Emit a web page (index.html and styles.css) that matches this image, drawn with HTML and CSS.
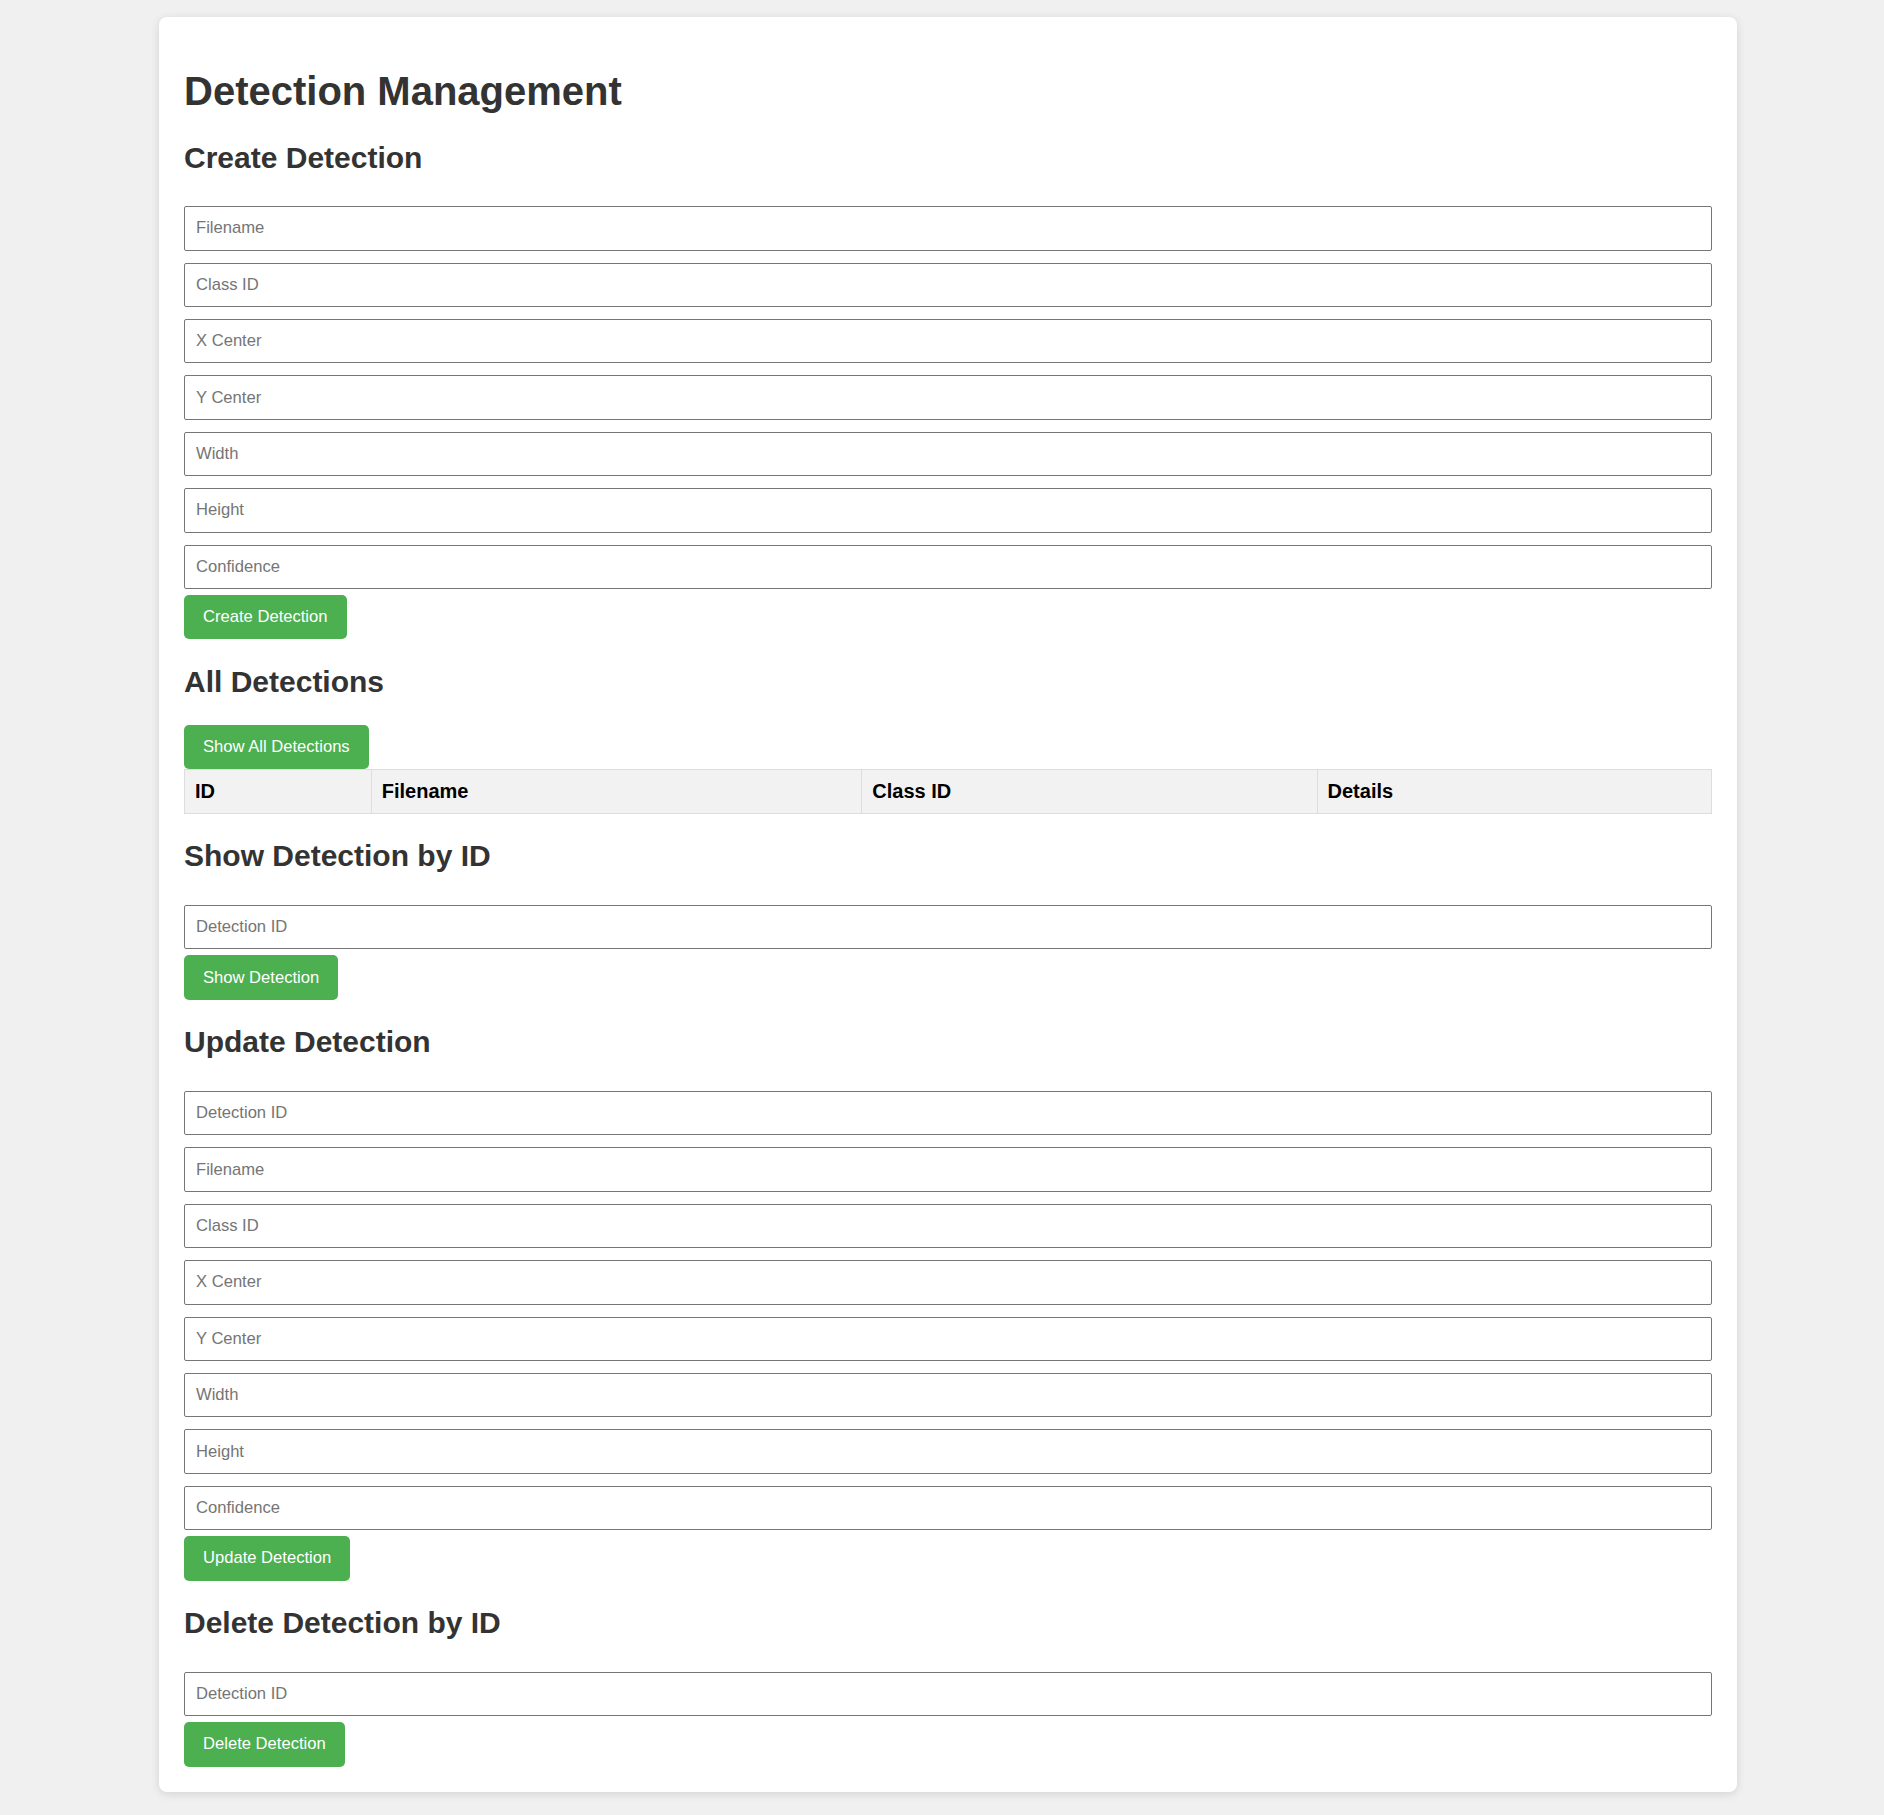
FILE: index.html
```html
<!DOCTYPE html>
<html lang="en">
<head>
<meta charset="utf-8">
<title>Detection Management</title>
<link rel="stylesheet" href="styles.css">
</head>
<body>
<div class="card">
  <h1>Detection Management</h1>

  <h2>Create Detection</h2>
  <div class="fields">
    <input type="text" placeholder="Filename">
    <input type="text" placeholder="Class ID">
    <input type="text" placeholder="X Center">
    <input type="text" placeholder="Y Center">
    <input type="text" placeholder="Width">
    <input type="text" placeholder="Height">
    <input type="text" placeholder="Confidence">
  </div>
  <button class="btn">Create Detection</button>

  <h2>All Detections</h2>
  <button class="btn">Show All Detections</button>
  <table class="table">
    <thead>
      <tr><th>ID</th><th>Filename</th><th>Class ID</th><th>Details</th></tr>
    </thead>
    <tbody></tbody>
  </table>

  <h2>Show Detection by ID</h2>
  <div class="fields">
    <input type="text" placeholder="Detection ID">
  </div>
  <button class="btn">Show Detection</button>

  <h2>Update Detection</h2>
  <div class="fields">
    <input type="text" placeholder="Detection ID">
    <input type="text" placeholder="Filename">
    <input type="text" placeholder="Class ID">
    <input type="text" placeholder="X Center">
    <input type="text" placeholder="Y Center">
    <input type="text" placeholder="Width">
    <input type="text" placeholder="Height">
    <input type="text" placeholder="Confidence">
  </div>
  <button class="btn">Update Detection</button>

  <h2>Delete Detection by ID</h2>
  <div class="fields">
    <input type="text" placeholder="Detection ID">
  </div>
  <button class="btn">Delete Detection</button>
</div>
</body>
</html>
```

FILE: styles.css
```css
html, body {
  margin: 0;
  padding: 0;
}

body {
  background: #f0f0f0;
  font-family: "Liberation Sans", Arial, sans-serif;
  font-size: 20px;
  color: #333;
  padding: 17px 0 26px;
}

.card {
  box-sizing: border-box;
  width: 1578px;
  margin-left: 159px;
  background: #fff;
  padding: 25px;
  border-radius: 8px;
  box-shadow: 0 2px 10px rgba(0, 0, 0, 0.12);
}

h1 {
  font-size: 40px;
  margin: 26.8px 0;
  color: #333;
}

h2 {
  font-size: 30px;
  margin: 25.6px 0;
  color: #333;
}

.fields {
  display: flex;
  flex-direction: column;
  gap: 12px;
  padding: 6px 0;
}

.fields input {
  box-sizing: border-box;
  display: block;
  width: 100%;
  height: 44.4px;
  margin: 0;
  padding: 12px 11px;
  font-family: "Liberation Sans", Arial, sans-serif;
  font-size: 16.6px;
  color: #333;
  border: 1px solid #767676;
  border-radius: 2px;
  background: #fff;
}

.fields input::placeholder {
  color: #757575;
}

.btn {
  display: block;
  box-sizing: border-box;
  height: 44.4px;
  padding: 0 19px;
  background: #4caf50;
  color: #fff;
  border: none;
  border-radius: 5px;
  font-family: "Liberation Sans", Arial, sans-serif;
  font-size: 16.6px;
  cursor: pointer;
}

.table {
  width: 100%;
  border-collapse: collapse;
}

.table th {
  background: #f2f2f2;
  border: 1px solid #ddd;
  padding: 10px;
  text-align: left;
  font-size: 20px;
  font-weight: bold;
  color: #000;
}
```
